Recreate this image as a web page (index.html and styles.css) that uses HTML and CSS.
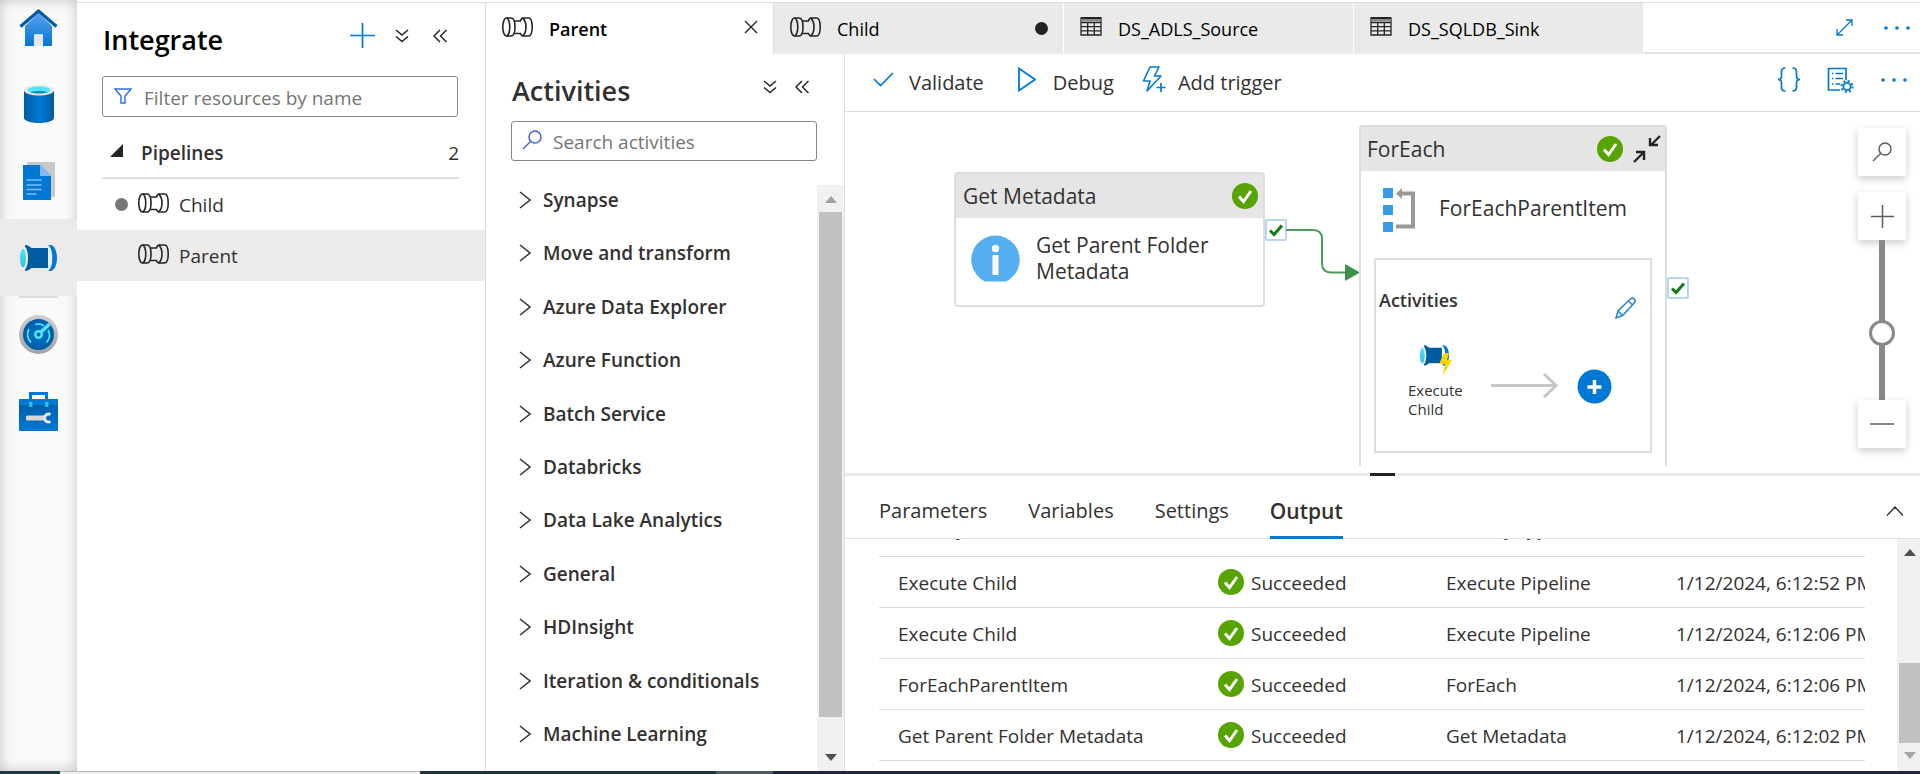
FILE: index.html
```html
<!DOCTYPE html>
<html lang="en">
<head>
<meta charset="utf-8">
<title>Integrate</title>
<link rel="stylesheet" href="styles.css">
</head>
<body>
<svg class="defs" aria-hidden="true">
  <defs>
    <linearGradient id="g-home" x1="0" y1="0" x2="0" y2="1"><stop offset="0" stop-color="#5ea0ef"/><stop offset="1" stop-color="#0078d4"/></linearGradient>
    <linearGradient id="g-db" x1="0" y1="0" x2="1" y2="0"><stop offset="0" stop-color="#005ba1"/><stop offset=".5" stop-color="#0078d4"/><stop offset="1" stop-color="#005ba1"/></linearGradient>
    <linearGradient id="g-ring" x1="0" y1="0" x2="0" y2="1"><stop offset="0" stop-color="#d0d0d0"/><stop offset="1" stop-color="#a3a3a3"/></linearGradient>
    <radialGradient id="g-dial"><stop offset="0" stop-color="#0078d4"/><stop offset="1" stop-color="#005ba1"/></radialGradient>
    <linearGradient id="g-box" x1="0" y1="0" x2="0" y2="1"><stop offset="0" stop-color="#005ba1"/><stop offset="1" stop-color="#0078d4"/></linearGradient>
    <linearGradient id="g-cyan" x1="0" y1="0" x2="0" y2="1"><stop offset="0" stop-color="#50e6ff"/><stop offset="1" stop-color="#32bedd"/></linearGradient>
  </defs>
  <symbol id="pipeline" viewBox="0 0 31 20">
    <g fill="none" stroke="#252423" stroke-width="1.600" stroke-linejoin="round">
      <ellipse cx="4.300" cy="10" rx="3.500" ry="9"/>
      <path d="M4.300 1H9c2.600 0 4 4 4 9s-1.400 9-4 9H4.300"/>
      <path d="M12.300 4H19M12.300 16.500H19"/>
      <path d="M18.500 4c.5-2 1.300-3 2.500-3h5.500c2.400 0 3.700 4 3.700 9s-1.300 9-3.700 9H21c-1.200 0-2-1-2.500-2.500"/>
      <path d="M20.500 1c2.600 2 3.500 5 3.500 9s-.9 7-3.500 9"/>
    </g>
  </symbol>
  <symbol id="pipe" viewBox="0 0 37 26">
    <path d="M5 0c4.500 0 5 3 7 3h16v20H12c-2 0-2.500 3-7 3z" fill="#005ba1"/>
    <path d="M28 0h2.500C34 0 37 5.500 37 13s-3 13-6.500 13H28c2.500-2 4-7 4-13s-1.500-11-4-13z" fill="#0078d4"/>
    <path d="M28 1c2.500 2 3.500 6.500 3.500 12S30.500 23 28 25" fill="none" stroke="#e8f2fa" stroke-width="1.5"/>
    <ellipse cx="3.500" cy="13" rx="4.500" ry="12" fill="#f2f2f2"/>
    <ellipse cx="3" cy="13" rx="3" ry="9.500" fill="url(#g-cyan)"/>
  </symbol>
  <symbol id="grid" viewBox="0 0 22 19">
    <path d="M1 1h20v17H1zM1 5.500h20M1 9.700h20M1 13.900h20M7.700 5v13M14.300 5v13" fill="none" stroke="#252423" stroke-width="1.300"/>
    <path d="M1 1h20v3.500H1z" fill="#8a8886"/>
    <path d="M1 1h20" stroke="#252423" stroke-width="2"/>
  </symbol>
  <symbol id="ok" viewBox="0 0 26 26">
    <circle cx="13" cy="13" r="13" fill="#57a300"/>
    <path d="M7 13.500l4.500 5L19 8" fill="none" stroke="#fff" stroke-width="3"/>
  </symbol>
  <symbol id="down2" viewBox="0 0 14 14">
    <path d="M1 1l6 5 6-5M1 7.500l6 5 6-5" fill="none" stroke="#252423" stroke-width="1.500"/>
  </symbol>
  <symbol id="left2" viewBox="0 0 14 14">
    <path d="M7 1L1 7l6 6M13.500 1l-6 6 6 6" fill="none" stroke="#252423" stroke-width="1.500"/>
  </symbol>
  <symbol id="chev" viewBox="0 0 12 18">
    <path d="M1 1l10 8-10 8" fill="none" stroke="#323130" stroke-width="1.500"/>
  </symbol>
  <symbol id="lens" viewBox="0 0 20 20">
    <path d="M1 19l7.500-7.500" fill="none" stroke="currentColor" stroke-width="1.500"/>
    <circle cx="13" cy="7" r="6" fill="none" stroke="currentColor" stroke-width="1.500"/>
  </symbol>
  <symbol id="dots" viewBox="0 0 28 4">
    <g fill="#0078d4"><circle cx="3" cy="2" r="1.800"/><circle cx="14" cy="2" r="1.800"/><circle cx="25" cy="2" r="1.800"/></g>
  </symbol>
  <symbol id="port" viewBox="0 0 22 22">
    <rect x="1" y="1" width="20" height="20" rx="1" fill="#fff" stroke="#b5d7f3" stroke-width="2"/>
    <path d="M5 11.500l4 4 8-9" fill="none" stroke="#107c10" stroke-width="3"/>
  </symbol>
</svg>

<div class="app">
  <nav class="rail" aria-label="Hubs">
    <button class="rail-item rail-home" aria-label="Home">
      <svg width="39" height="38" viewBox="0 0 39 38"><path d="M6 17L19.500 4 33 17v20H24V25.500h-9V37H6z" fill="url(#g-home)"/><path d="M15 25.500h9V37h-9z" fill="#e6e6e6"/><path d="M1.500 17.500L19.500 2l18 15.500" fill="none" stroke="#005ba1" stroke-width="3.200" stroke-linejoin="round"/></svg>
    </button>
    <button class="rail-item" aria-label="Data">
      <svg width="30" height="38" viewBox="0 0 30 38"><path d="M0 5v28c0 2.800 6.700 5 15 5s15-2.200 15-5V5z" fill="url(#g-db)"/><ellipse cx="15" cy="5.300" rx="15" ry="5.300" fill="#e8e8e8"/><ellipse cx="15" cy="5" rx="11.500" ry="3.600" fill="#50e6ff"/><path d="M6 7.200c5-1.600 13-1.600 18 0-5 1.800-13 1.800-18 0z" fill="#198ab3"/></svg>
    </button>
    <button class="rail-item" aria-label="Develop">
      <svg width="34" height="40" viewBox="0 0 34 40"><rect x="5" y="1" width="28" height="35" rx="1" fill="#c8c8c8"/><path d="M1 4h17l11 11v24H2a1 1 0 0 1-1-1z" fill="#0078d4"/><path d="M18 4l11 11H18z" fill="#83b9f9"/><path d="M5 19h14M5 24h14M5 28.500h14M5 33h9" stroke="#83b9f9" stroke-width="1.500" stroke-linecap="round"/></svg>
    </button>
    <button class="rail-item selected" aria-label="Integrate">
      <svg width="37" height="26"><use href="#pipe"/></svg>
    </button>
    <hr class="rail-rule">
    <button class="rail-item" aria-label="Monitor">
      <svg width="39" height="39" viewBox="0 0 39 39"><circle cx="19.500" cy="19.500" r="19.500" fill="url(#g-ring)"/><circle cx="19.500" cy="19.500" r="15.500" fill="url(#g-dial)"/><g fill="none" stroke="#50e6ff" stroke-width="1.700"><path d="M16 9.500a11 11 0 0 1 9 1.200M29 15a11 11 0 0 1-1.500 12.500M10 14a11 11 0 0 0 2 13.500"/></g><path d="M20 19L30.500 9" stroke="#50e6ff" stroke-width="3.500"/><circle cx="19.500" cy="19.500" r="3.200" fill="#005ba1" stroke="#50e6ff" stroke-width="2.500"/></svg>
    </button>
    <button class="rail-item" aria-label="Manage">
      <svg width="39" height="39" viewBox="0 0 39 39"><path d="M11.500 8V1.500h16V8" fill="none" stroke="#0078d4" stroke-width="3"/><rect y="7" width="39" height="32" rx="1" fill="url(#g-box)"/><rect y="7" width="39" height="6" fill="#0078d4"/><path d="M10 10h3.500v5H10zM26 10h3.500v5H26z" fill="#32bedd"/><rect x="7" y="23.500" width="20" height="5" rx="1.500" fill="#d8d8d8"/><path d="M31.500 22.500A4 4 0 1 0 31.500 29.500" fill="none" stroke="#e6e6e6" stroke-width="3"/></svg>
    </button>
  </nav>

  <aside class="resources">
    <header class="pane-head">
      <h1 class="pane-title pane-title-dark">Integrate</h1>
      <button class="icon-btn" aria-label="Add"><svg width="25" height="25" viewBox="0 0 25 25"><path d="M12.500 0v25M0 12.500h25" stroke="#0078d4" stroke-width="1.700"/></svg></button>
      <button class="icon-btn" aria-label="Expand all"><svg width="14" height="14"><use href="#down2"/></svg></button>
      <button class="icon-btn" aria-label="Collapse pane"><svg width="14" height="14"><use href="#left2"/></svg></button>
    </header>
    <label class="field resources-field">
      <svg width="18" height="16" viewBox="0 0 18 16"><path d="M1 1h16l-6 7v7H7V8z" fill="none" stroke="#2f6fdc" stroke-width="1.400"/></svg>
      <input type="text" placeholder="Filter resources by name" aria-label="Filter resources by name">
    </label>
    <button class="group-head">
      <svg width="13" height="13" viewBox="0 0 13 13"><path d="M13 0v13H0z" fill="#252423"/></svg>
      <span class="group-name">Pipelines</span><span>2</span>
    </button>
    <button class="resource"><span class="unsaved"></span><svg width="31" height="20"><use href="#pipeline"/></svg>Child</button>
    <button class="resource selected"><span class="unsaved none"></span><svg width="31" height="20"><use href="#pipeline"/></svg>Parent</button>
  </aside>

  <main class="main">
    <div class="tabs">
      <button class="tab active"><svg width="31" height="20"><use href="#pipeline"/></svg><span class="tab-name">Parent</span>
        <svg width="14" height="14" viewBox="0 0 14 14"><path d="M1 1l12 12M13 1L1 13" stroke="#252423" stroke-width="1.400"/></svg></button>
      <button class="tab"><svg width="31" height="20"><use href="#pipeline"/></svg><span class="tab-name">Child</span><span class="tab-dot"></span></button>
      <button class="tab"><svg width="22" height="19"><use href="#grid"/></svg><span class="tab-name">DS_ADLS_Source</span></button>
      <button class="tab"><svg width="22" height="19"><use href="#grid"/></svg><span class="tab-name">DS_SQLDB_Sink</span></button>
      <div class="tabs-end">
        <button class="icon-btn" aria-label="Full screen"><svg width="17" height="17" viewBox="0 0 17 17"><path d="M1.500 15.500l14-14M10 1h6v6M1 10v6h6" fill="none" stroke="#0078d4" stroke-width="1.300"/></svg></button>
        <button class="icon-btn" aria-label="More"><svg width="28" height="4"><use href="#dots"/></svg></button>
      </div>
    </div>

    <div class="work">
      <section class="activities">
        <header class="pane-head activities-head">
          <h2 class="pane-title">Activities</h2>
          <button class="icon-btn" aria-label="Expand all"><svg width="14" height="14"><use href="#down2"/></svg></button>
          <button class="icon-btn" aria-label="Collapse pane"><svg width="14" height="14"><use href="#left2"/></svg></button>
        </header>
        <label class="field activities-field">
          <svg class="blue" width="20" height="20"><use href="#lens"/></svg>
          <input type="text" placeholder="Search activities" aria-label="Search activities">
        </label>
        <div class="activity-scroll">
          <div class="activity-list">
            <button><svg width="12" height="18"><use href="#chev"/></svg>Synapse</button>
            <button><svg width="12" height="18"><use href="#chev"/></svg>Move and transform</button>
            <button><svg width="12" height="18"><use href="#chev"/></svg>Azure Data Explorer</button>
            <button><svg width="12" height="18"><use href="#chev"/></svg>Azure Function</button>
            <button><svg width="12" height="18"><use href="#chev"/></svg>Batch Service</button>
            <button><svg width="12" height="18"><use href="#chev"/></svg>Databricks</button>
            <button><svg width="12" height="18"><use href="#chev"/></svg>Data Lake Analytics</button>
            <button><svg width="12" height="18"><use href="#chev"/></svg>General</button>
            <button><svg width="12" height="18"><use href="#chev"/></svg>HDInsight</button>
            <button><svg width="12" height="18"><use href="#chev"/></svg>Iteration &amp; conditionals</button>
            <button><svg width="12" height="18"><use href="#chev"/></svg>Machine Learning</button>
          </div>
          <div class="scrollbar" aria-hidden="true">
            <span class="arrow up faint"></span><span class="thumb thumb-long"></span><span class="arrow down"></span>
          </div>
        </div>
      </section>

      <section class="editor">
        <div class="toolbar">
          <button class="tool"><svg width="21" height="15" viewBox="0 0 21 15"><path d="M1 7l6.500 6.500L20 1" fill="none" stroke="#0078d4" stroke-width="1.700"/></svg>Validate</button>
          <button class="tool tool-debug"><svg width="18" height="25" viewBox="0 0 18 25"><path d="M1 1.500v22l16-11z" fill="none" stroke="#0078d4" stroke-width="1.800"/></svg>Debug</button>
          <button class="tool tool-trigger"><svg width="24" height="27" viewBox="0 0 24 27"><path d="M8 1h9l-4.500 9H19L5 25l3-10H1.500z" fill="none" stroke="#0078d4" stroke-width="1.600" stroke-linejoin="round"/><path d="M19 17v9M14.500 21.500h9" stroke="#0078d4" stroke-width="1.700"/></svg>Add trigger</button>
          <span class="spacer"></span>
          <button class="icon-btn" aria-label="Code"><svg width="24" height="25" viewBox="0 0 24 25"><path d="M8.500 1C5.500 1 4.500 2 4.500 4.500v4.500c0 2-1 3.500-3.500 3.500 2.500 0 3.500 1.500 3.500 3.500v4.500c0 2.500 1 3.500 4 3.500M15.500 1c3 0 4 1 4 3.500v4.500c0 2 1 3.500 3.500 3.500-2.500 0-3.500 1.500-3.500 3.500v4.500c0 2.500-1 3.500-4 3.500" fill="none" stroke="#0078d4" stroke-width="1.700"/></svg></button>
          <button class="icon-btn" aria-label="Properties"><svg width="27" height="26" viewBox="0 0 27 26"><path d="M19 13V1.500H1.500v21.500H13M5 6.500h1.500M8.500 6.500H16M5 11.500h1.500M8.500 11.500H16M5 17h1.500M8.500 17H13" fill="none" stroke="#0078d4" stroke-width="1.700"/><circle cx="20" cy="19.500" r="3.600" fill="none" stroke="#0078d4" stroke-width="1.800"/><circle cx="20" cy="19.500" r="5.500" fill="none" stroke="#0078d4" stroke-width="2" stroke-dasharray="2 2.320"/></svg></button>
          <button class="icon-btn" aria-label="More"><svg width="28" height="4"><use href="#dots"/></svg></button>
        </div>

        <div class="canvas">
          <article class="node node-metadata">
            <header class="node-head"><span class="node-type">Get Metadata</span><svg width="26" height="26"><use href="#ok"/></svg></header>
            <div class="node-body">
              <svg width="49" height="47" viewBox="0 0 49 47"><path d="M14 46.500A24.200 24.200 0 1 1 35 46.500z" fill="#55aef0"/><circle cx="24.500" cy="13.500" r="3.700" fill="#fff"/><rect x="21.500" y="20" width="6" height="20" rx="1" fill="#fff"/></svg>
              <span>Get Parent Folder Metadata</span>
            </div>
          </article>
          <svg class="port port-metadata" width="22" height="22"><use href="#port"/></svg>
          <svg class="link" width="74" height="54" viewBox="0 0 74 54"><path d="M0 2h27q9 0 9 9v24q0 9.500 9 9.500h15" fill="none" stroke="#4c9a57" stroke-width="2"/><path d="M59 36l15 8.500L59 53z" fill="#3f8f4d"/></svg>

          <article class="node node-foreach">
            <header class="node-head"><span class="node-type">ForEach</span><svg width="26" height="26"><use href="#ok"/></svg>
              <svg width="28" height="28" viewBox="0 0 28 28"><path d="M1 27l9-9M3 17h8v8M27 1l-9 9M17 3v7h8" fill="none" stroke="#252423" stroke-width="2.400"/></svg></header>
            <div class="node-body foreach-body">
              <svg width="33" height="44" viewBox="0 0 33 44"><path d="M0 0h10v10H0zM0 17h10v10H0zM0 34h10v10H0z" fill="#379be8"/><path d="M17 5.500h13v33H13" fill="none" stroke="#999" stroke-width="4"/><path d="M13 5.500L19 0v11z" fill="#999"/></svg>
              <span>ForEachParentItem</span>
            </div>
            <div class="inner">
              <div class="inner-head"><strong>Activities</strong>
                <button class="icon-btn" aria-label="Edit activities"><svg width="22" height="22" viewBox="0 0 22 22"><path d="M1 21l2-7L15.500 1.800q2-1.500 3.700.3t.3 3.700L7.500 18.500zM3 14l4.500 4.500M13.500 4l4.300 4.300" fill="none" stroke="#2b88d8" stroke-width="1.600"/></svg></button></div>
              <div class="inner-flow">
                <div class="child">
                  <svg width="33" height="30" viewBox="0 0 33 30"><svg width="29" height="21" viewBox="0 0 37 26"><use href="#pipe" width="37" height="26"/></svg><path d="M24 8h5l-2 7h5l-9 15 2-11h-6z" fill="#ffd400"/></svg>
                  <span>Execute Child</span>
                </div>
                <svg class="flow-arrow" width="67" height="25" viewBox="0 0 67 25"><path d="M0 12.500h64M53 1l12 11.500L53 24" fill="none" stroke="#c8c6c4" stroke-width="3"/></svg>
                <button class="icon-btn" aria-label="Add activity"><svg width="35" height="35" viewBox="0 0 35 35"><circle cx="17.500" cy="17.500" r="17" fill="#0078d4"/><path d="M17.500 11v14M10.500 18h14" stroke="#fff" stroke-width="3.500"/></svg></button>
              </div>
            </div>
          </article>
          <svg class="port port-foreach" width="22" height="22"><use href="#port"/></svg>

          <div class="zoom">
            <button class="zoom-btn zoom-find" aria-label="Find"><svg width="20" height="20"><use href="#lens"/></svg></button>
            <button class="zoom-btn" aria-label="Zoom in"><svg width="23" height="23" viewBox="0 0 23 23"><path d="M11.500 0v23M0 11.500h23" stroke="#605e5c" stroke-width="1.500"/></svg></button>
            <input class="zoom-range" type="range" min="0" max="100" value="40" aria-label="Zoom">
            <button class="zoom-btn" aria-label="Zoom out"><svg width="24" height="2" viewBox="0 0 24 2"><path d="M0 1h24" stroke="#605e5c" stroke-width="1.500"/></svg></button>
          </div>
        </div>

        <div class="splitter"><span></span></div>

        <div class="detail-tabs">
          <button>Parameters</button><button>Variables</button><button>Settings</button><button class="active">Output</button>
          <span class="spacer"></span>
          <button class="icon-btn" aria-label="Collapse"><svg width="18" height="10" viewBox="0 0 18 10"><path d="M1 9.500L9 1l8 8.500" fill="none" stroke="#323130" stroke-width="1.400"/></svg></button>
        </div>
        <div class="output">
          <div class="runs-wrap">
            <table class="runs">
              <colgroup><col class="c-name"><col class="c-status"><col class="c-type"><col></colgroup>
              <thead><tr><th>Activity name</th><th></th><th>Activity type</th><th></th></tr></thead>
              <tbody>
                <tr><td>Execute Child</td><td><span class="status"><svg width="26" height="26"><use href="#ok"/></svg>Succeeded</span></td><td>Execute Pipeline</td><td>1/12/2024, 6:12:52 PM</td></tr>
                <tr><td>Execute Child</td><td><span class="status"><svg width="26" height="26"><use href="#ok"/></svg>Succeeded</span></td><td>Execute Pipeline</td><td>1/12/2024, 6:12:06 PM</td></tr>
                <tr><td>ForEachParentItem</td><td><span class="status"><svg width="26" height="26"><use href="#ok"/></svg>Succeeded</span></td><td>ForEach</td><td>1/12/2024, 6:12:06 PM</td></tr>
                <tr><td>Get Parent Folder Metadata</td><td><span class="status"><svg width="26" height="26"><use href="#ok"/></svg>Succeeded</span></td><td>Get Metadata</td><td>1/12/2024, 6:12:02 PM</td></tr>
              </tbody>
            </table>
          </div>
          <div class="scrollbar scrollbar-out" aria-hidden="true">
            <span class="arrow up"></span><span class="thumb thumb-short"></span><span class="arrow down faint"></span>
          </div>
        </div>
      </section>
    </div>
  </main>
</div>
<div class="strip" aria-hidden="true"><span class="strip-a"></span><span class="strip-b"></span><span class="strip-c"></span><span class="strip-d"></span><span class="strip-e"></span></div>
</body>
</html>
```
FILE: styles.css
```css
* { box-sizing: border-box; }

body {
  margin: 0;
  height: 100vh;
  display: flex;
  flex-direction: column;
  overflow: hidden;
  background: #fff;
  color: #323130;
  font-family: "Open Sans", "Noto Sans", sans-serif;
  font-size: 19px;
  line-height: 26px;
}

button, input {
  font: inherit;
  color: inherit;
  background: none;
  border: 0;
  padding: 0;
  margin: 0;
}

button { text-align: left; cursor: pointer; }
svg { display: block; flex: none; }
h1, h2 { margin: 0; }

.defs { position: absolute; width: 0; height: 0; }
.spacer { flex: 1; }
.icon-btn { display: flex; flex: none; }

.app { flex: 1; min-height: 0; display: flex; }

/* Hub rail */
.rail {
  width: 77px;
  flex: none;
  display: flex;
  flex-direction: column;
  background: #fafafa;
  box-shadow: inset 0 0 14px rgba(0, 0, 0, .22);
}
.rail-item {
  height: 77px;
  flex: none;
  display: flex;
  align-items: center;
  justify-content: center;
}
.rail-home { height: 65px; padding-bottom: 10px; }
.rail-item.selected { background: #edebe9; }
.rail-rule { width: 39px; height: 2px; margin: 0 auto -2px; border: 0; background: #dcdcdc; }

/* Resource pane */
.resources {
  width: 409px;
  flex: none;
  margin-top: 2px;
  border-top: 1px solid #ddd;
  border-right: 1px solid #ddd;
}
.pane-head {
  display: flex;
  align-items: center;
  gap: 20px;
  height: 73px;
  padding: 0 38px 8px 26px;
}
.pane-title { flex: 1; padding-top: 8px; font-size: 27px; line-height: 36px; font-weight: 600; }
.pane-title-dark { color: #000; }
.resources .pane-head .icon-btn + .icon-btn + .icon-btn { margin-left: 4px; }

.field {
  display: flex;
  align-items: center;
  border: 1px solid #868686;
  border-radius: 3px;
}
.field input { flex: 1; min-width: 0; padding-top: 2px; outline: 0; }
.field input::placeholder { color: #757575; opacity: 1; }
.field svg { margin-bottom: 2px; }
.field .blue { color: #4a5fd8; }
.resources-field { height: 41px; margin: 0 27px 0 25px; padding-left: 11px; gap: 12px; }

.group-head {
  display: flex;
  align-items: center;
  width: 357px;
  height: 62px;
  margin-left: 25px;
  padding-left: 8px;
  padding-top: 12px;
  border-bottom: 2px solid #ddd;
}
.group-head svg { margin-bottom: 5px; }
.group-name { flex: 1; margin-left: 18px; font-weight: 600; }

.resource {
  display: flex;
  align-items: center;
  width: 100%;
  height: 51px;
  padding-left: 38px;
}
.resource svg { margin: 0 10px 4px 10px; }
.resource.selected { background: #edebe9; }
.unsaved { width: 13px; height: 13px; border-radius: 50%; background: #797775; }
.unsaved.none { background: none; }

/* Open editors */
.main { flex: 1; min-width: 0; display: flex; flex-direction: column; margin-top: 2px; }
.tabs { display: flex; height: 52px; flex: none; border-top: 1px solid #ddd; }
.tab {
  display: flex;
  align-items: center;
  width: 290px;
  padding: 0 15px 0 16px;
  background: #eaeaea;
  border-right: 1px solid #fff;
  color: #000;
  font-size: 18px;
}
.tab.active { width: 288px; background: #fff; font-weight: 600; border-right-color: #ddd; }
.tab svg { margin-bottom: 4px; }
.tab-name { flex: 1; margin-left: 16px; }
.tab-dot { width: 13px; height: 13px; border-radius: 50%; background: #252423; }
.tabs-end {
  flex: 1;
  display: flex;
  align-items: center;
  justify-content: flex-end;
  gap: 30px;
  padding-right: 9px;
  border-bottom: 2px solid #e3e3e3;
}

.work { flex: 1; min-height: 0; display: flex; }

/* Activities pane */
.activities {
  width: 359px;
  flex: none;
  display: flex;
  flex-direction: column;
  border-right: 1px solid #ddd;
}
.activities-head { height: 67px; gap: 18px; padding: 0 35px 2px 26px; }
.activities-field { height: 40px; flex: none; margin: 0 27px 0 25px; padding-left: 10px; gap: 11px; }
.activity-scroll { flex: 1; min-height: 0; display: flex; }
.activity-list {
  flex: 1;
  display: flex;
  flex-direction: column;
  padding: 12px 0 10px;
}
.activity-list button {
  flex: 1;
  display: flex;
  align-items: center;
  gap: 12px;
  padding-left: 33px;
  font-weight: 600;
}

.scrollbar {
  width: 27px;
  margin-top: 24px;
  display: flex;
  flex-direction: column;
  align-items: center;
  justify-content: space-between;
  padding: 11px 2px 10px;
  background: #f1f1f1;
}
.thumb { width: 100%; background: #c1c1c1; }
.thumb-long { flex: 1; margin: 9px 0 37px; }
.thumb-short { flex: none; height: 80px; margin-top: 98px; }
.arrow { border: 6px solid transparent; }
.arrow.up { border-top: 0; border-bottom: 7px solid #505050; }
.arrow.down { border-bottom: 0; border-top: 7px solid #505050; }
.arrow.up.faint { border-bottom-color: #a3a3a3; }
.arrow.down.faint { border-top-color: #a3a3a3; }

/* Editor */
.editor { flex: 1; min-width: 0; display: flex; flex-direction: column; }
.toolbar {
  display: flex;
  align-items: center;
  height: 58px;
  flex: none;
  gap: 26px;
  padding: 0 12px 0 28px;
  border-bottom: 1px solid #ddd;
  font-size: 20px;
}
.toolbar svg { margin-bottom: 6px; }
.tool { display: flex; align-items: center; gap: 15px; margin-right: 8px; }
.tool-debug { gap: 17px; margin-right: 2px; }
.tool-trigger { gap: 12px; }

.canvas { flex: 1; min-height: 0; position: relative; overflow: hidden; margin-bottom: 7px; font-size: 21px; }
.node {
  position: absolute;
  background: #fff;
  border: 2px solid #ddd;
  border-radius: 4px;
}
.node-head {
  display: flex;
  align-items: center;
  height: 44px;
  padding: 0 5px 0 7px;
  background: #e5e5e5;
}
.node-type { flex: 1; }
.node-body { display: flex; align-items: center; gap: 16px; padding: 14px 32px 22px 15px; }
.node-metadata { left: 109px; top: 60px; width: 311px; height: 135px; }
.node-foreach { left: 514px; top: 13px; width: 308px; height: 380px; }
.node-foreach .node-head { padding-left: 6px; padding-right: 4px; }
.node-foreach .node-head svg + svg { margin-left: 10px; }
.foreach-body { gap: 23px; padding: 17px 20px 26px 22px; }
.foreach-body span { padding-bottom: 4px; }
.inner { height: 195px; margin: 0 13px; border: 2px solid #ddd; padding: 27px 13px 0 3px; }
.inner-head { display: flex; justify-content: space-between; font-size: 18px; }
.inner-head strong { font-weight: 600; }
.inner-head .icon-btn { padding-top: 10px; }
.inner-flow { display: flex; align-items: center; padding: 26px 0 0 29px; }
.child { width: 66px; font-size: 15px; line-height: 19px; }
.child svg { margin: 0 0 6px 12px; }
.child span { display: block; }
.flow-arrow { margin: 6px 19px 0 17px; }
.inner-flow .icon-btn { margin-top: 8px; }
.port { position: absolute; }
.port-metadata { left: 420px; top: 107px; }
.port-foreach { left: 822px; top: 165px; }
.link { position: absolute; left: 441px; top: 116px; }

.zoom {
  position: absolute;
  right: 14px;
  top: 16px;
  display: flex;
  flex-direction: column;
  align-items: center;
}
.zoom-btn {
  display: flex;
  align-items: center;
  justify-content: center;
  width: 48px;
  height: 48px;
  background: #fff;
  color: #605e5c;
  box-shadow: 0 3px 8px rgba(0, 0, 0, .2);
}
.zoom-find { margin-bottom: 16px; }
.zoom-range {
  appearance: none;
  writing-mode: vertical-lr;
  direction: rtl;
  width: 26px;
  height: 160px;
}
.zoom-range::-webkit-slider-runnable-track {
  width: 6px;
  height: 160px;
  background: #8a8886;
}
.zoom-range::-webkit-slider-thumb {
  appearance: none;
  width: 26px;
  height: 26px;
  margin-left: -10px;
  border: 3px solid #8a8886;
  border-radius: 50%;
  background: #fff;
}

.splitter { flex: none; height: 3px; background: #eaeaea; display: flex; justify-content: center; }
.splitter span { width: 25px; background: #252423; }

/* Run output */
.detail-tabs {
  display: flex;
  flex: none;
  align-items: center;
  gap: 41px;
  height: 63px;
  padding: 0 16px 0 34px;
  border-bottom: 1px solid #e1e1e1;
  font-size: 20px;
}
.detail-tabs button { height: 64px; display: flex; align-items: center; padding-top: 10px; border-bottom: 3px solid transparent; }
.detail-tabs .active { font-size: 21px; font-weight: 600; border-bottom-color: #0078d4; z-index: 1; }

.output { display: flex; height: 232px; flex: none; }
.runs-wrap { flex: 1; min-width: 0; overflow: hidden; padding: 0 32px 0 34px; }
.runs { width: 100%; table-layout: fixed; border-collapse: collapse; margin-top: -34px; }
.c-name { width: 320px; }
.c-status { width: 228px; }
.c-type { width: 230px; }
.runs th, .runs td {
  height: 51px;
  padding: 0 0 0 19px;
  border-bottom: 1px solid #ddd;
  text-align: left;
  white-space: nowrap;
  overflow: hidden;
}
.runs th { padding-bottom: 5px; font-weight: 600; }
.runs td { padding-top: 2px; }
.status { display: flex; align-items: center; gap: 7px; }
.status svg { margin-bottom: 2px; }
.scrollbar-out { width: 23px; margin: 0; padding: 10px 0 12px 2px; }

/* Window edge */
.strip { flex: none; height: 3px; display: flex; background: #1b2a40; }
.strip-a { width: 60px; background: #1d3a44; }
.strip-b { width: 360px; background: #f0f0ee; border-top: 1px solid #b9b9b9; }
.strip-c { width: 296px; background: #1d3440; }
.strip-d { width: 57px; background: #4c5b66; }
```
